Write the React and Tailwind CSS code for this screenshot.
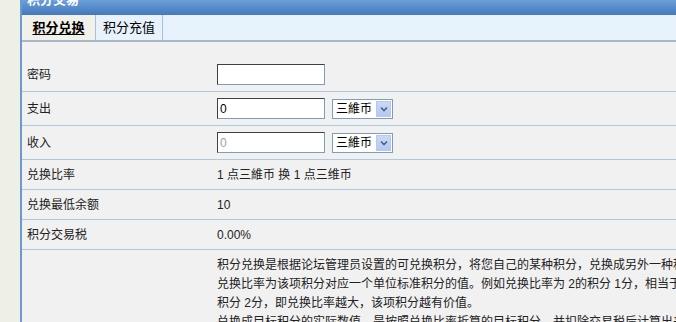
import React from "react";

const font = { fontFamily: '"Liberation Sans", "Noto Sans CJK SC", sans-serif' };

function Select() {
    return (
        <div className="flex items-center h-[20px] w-[61px] bg-white border border-[#7f9db9] pl-[3px] pr-[1px]">
            <span className="flex-1 text-[12px] text-black leading-none">三維币</span>
            <span className="w-[15px] h-[16px] bg-gradient-to-b from-[#c9d9f7] to-[#b3c8f2] border border-[#b6c9ee] flex items-center justify-center">
                <svg width="8" height="6" viewBox="0 0 8 6">
                    <path d="M1 1.5 L4 4.5 L7 1.5" stroke="#4d6185" strokeWidth="1.6" fill="none" />
                </svg>
            </span>
        </div>
    );
}

function Input({ value, disabled }) {
    return (
        <div
            className={`w-[108px] h-[21px] bg-white border border-t-[#404040] border-l-[#404040] border-r-[#7f9db9] border-b-[#7f9db9] text-[12px] pl-[2px] pt-[4px] leading-none ${
                disabled ? "text-[#a0a0a0]" : "text-black"
            }`}
        >
            {value}
        </div>
    );
}

function Row({ label, children, tall }) {
    return (
        <div className={`flex items-center border-b border-[#aec8e2] ${tall ? "h-[34px]" : "h-[30px]"}`}>
            <div className="w-[195px] pl-[5px] shrink-0">{label}</div>
            <div className="flex items-center gap-[7px]">{children}</div>
        </div>
    );
}

export default function App() {
    return (
        <div className="w-[676px] h-[322px] overflow-hidden flex bg-[#eef0e6] text-[12px] text-[#222]" style={font}>
            <div className="w-[20px] shrink-0" />
            <div className="w-[2px] shrink-0 bg-[#6a9ad2]" />
            <div className="flex-1 min-w-0 bg-[#f1f1f1]">
                {/* header bar, title clipped at top */}
                <div className="h-[15px] overflow-hidden bg-gradient-to-b from-[#6a9fd8] to-[#4478bd]">
                    <div className="-mt-[9px] pl-[5px] text-white font-bold text-[13px] leading-[18px]">积分交易</div>
                </div>

                {/* tabs */}
                <div className="flex h-[27px] bg-[#e8f2fd] border-b-2 border-[#a9b8c8]">
                    <div className="w-[73px] flex items-center justify-center bg-[#f1f1ea] font-bold underline underline-offset-2 text-[13px] text-black">
                        积分兑换
                    </div>
                    <div className="w-[68px] flex items-center justify-center border-x border-[#a8c0dc] text-[13px] text-black">
                        积分充值
                    </div>
                </div>

                <div className="mt-[16px] w-[900px]">
                    <Row label="密码" tall>
                        <Input value="" />
                    </Row>
                    <Row label="支出" tall>
                        <Input value="0" />
                        <Select />
                    </Row>
                    <Row label="收入" tall>
                        <Input value="0" disabled />
                        <Select />
                    </Row>
                    <Row label="兑换比率">1 点三維币 换 1 点三维币</Row>
                    <Row label="兑换最低余额">10</Row>
                    <Row label="积分交易税">0.00%</Row>
                    <div className="flex pt-[6px]">
                        <div className="w-[195px] shrink-0" />
                        <div className="leading-[19px] whitespace-nowrap">
                            <div>积分兑换是根据论坛管理员设置的可兑换积分，将您自己的某种积分，兑换成另外一种积分。</div>
                            <div>兑换比率为该项积分对应一个单位标准积分的值。例如兑换比率为 2的积分 1分，相当于标准</div>
                            <div>积分 2分，即兑换比率越大，该项积分越有价值。</div>
                            <div>兑换成目标积分的实际数值，是按照兑换比率折算的目标积分，并扣除交易税后计算出来的。</div>
                        </div>
                    </div>
                </div>
            </div>
        </div>
    );
}
